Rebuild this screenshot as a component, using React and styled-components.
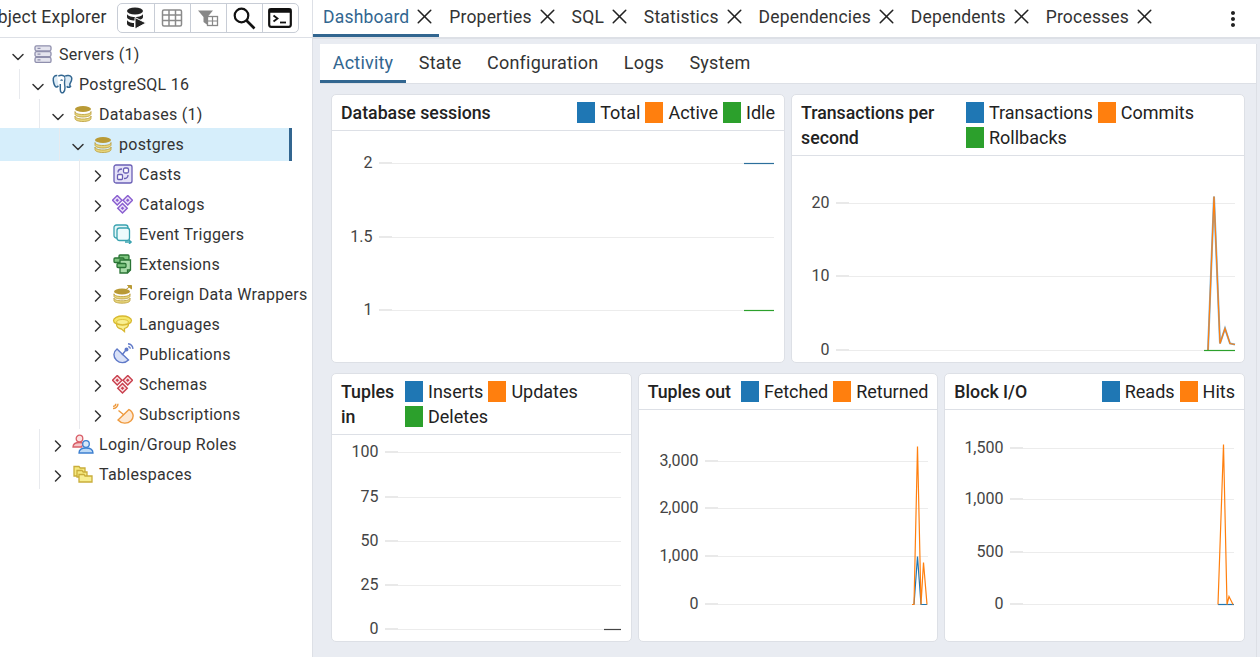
import React from 'react';
import styled, { createGlobalStyle } from 'styled-components';
import { ChevronDown, ChevronRight, X } from 'lucide-react';
import { MdMoreVert } from 'react-icons/md';

const GlobalStyle = createGlobalStyle`
  html, body {
    margin: 0;
    padding: 0;
    width: 1260px;
    height: 657px;
    overflow: hidden;
    font-family: Roboto, "Liberation Sans", sans-serif;
    background: #fff;
    color: #222;
  }
  * { box-sizing: border-box; }
`;

const GOLD = '#b99a35';
const GOLD_FILL = '#e8d77f';

const DbIcon = () => (
  <svg width="18" height="18" viewBox="0 0 18 18">
    <ellipse cx="9" cy="4" rx="8" ry="3" fill={GOLD} />
    <path d="M1 6.500c0 1.800 3.600 3 8 3s8-1.200 8-3v2.500c0 1.800-3.600 3-8 3s-8-1.200-8-3z" fill={GOLD_FILL} stroke={GOLD} strokeWidth=".8" />
    <path d="M1 11c0 1.800 3.600 3 8 3s8-1.200 8-3v2.500c0 1.800-3.600 3-8 3s-8-1.200-8-3z" fill={GOLD_FILL} stroke={GOLD} strokeWidth=".8" />
  </svg>
);

const ServersIcon = () => (
  <svg width="18" height="18" viewBox="0 0 18 18" fill="#e4e4ee" stroke="#8f8fad" strokeWidth="1.300">
    <rect x="1" y="0.800" width="16" height="5" rx="1.500" />
    <rect x="1" y="6.600" width="16" height="5" rx="1.500" />
    <rect x="1" y="12.400" width="16" height="5" rx="1.500" />
    <path d="M3.500 3.300h3M3.500 9.100h3M3.500 14.900h3" />
  </svg>
);

const ElephantIcon = () => (
  <svg width="21" height="21" viewBox="0 0 20 20" fill="none" stroke="#336791" strokeWidth="1.400" strokeLinejoin="round">
    <path d="M5 1.500C2.500 1.200.8 3 1.200 6c.3 2.400 1.200 5.200 2.500 6.200 1 .7 1.800-.2 2.400-1" fill="#dcebf6" />
    <path d="M6 2c1.600-.8 4-.9 5.600 0 1 .6 1 2.500.6 4.200-.3 1.300-.3 3 0 5 .3 2.200.2 5-1.300 6.300-1.500 1.200-3-.2-3-2.500V9.500" fill="#fff" />
    <path d="M12.500 2c1.800-.9 4.700-.7 5.800.8.900 1.300.2 4-.8 5.700-.8 1.300-.6 2.500.2 3.300-1 1-2.800.9-3.800 0" fill="#dcebf6" />
    <path d="M8.500 6.500c0-1 1.300-1 1.300 0" />
  </svg>
);

const CastsIcon = () => (
  <svg width="20" height="20" viewBox="0 0 20 20" fill="none" stroke="#6a5fb5" strokeWidth="1.300">
    <rect x="1" y="1" width="18" height="18" rx="2" fill="#e5e2f8" />
    <rect x="10.500" y="4" width="5" height="5" rx="1.500" fill="#fff" />
    <rect x="4.500" y="10.500" width="5" height="5" rx="1" fill="#fff" />
    <path d="M5 8.500c0-2.500 1.500-3.500 4-3.500M15 11c0 2.500-1.500 3.500-4 3.500" />
  </svg>
);

const DiamondsIcon = ({ color, fill }) => (
  <svg width="21" height="19" viewBox="0 0 20 18">
    {[[5, 5], [15, 5], [10, 12.500]].map(([x, y]) => (
      <g key={x}>
        <path d={`M${x} ${y - 4.500}l4.500 4.500-4.500 4.500-4.500-4.500z`} fill={fill} stroke={color} strokeWidth="1.400" />
        <rect x={x - 1.200} y={y - 1.200} width="2.400" height="2.400" fill={color} transform={`rotate(45 ${x} ${y})`} />
      </g>
    ))}
  </svg>
);

const TriggerIcon = () => (
  <svg width="20" height="20" viewBox="0 0 20 20" fill="none" stroke="#3aa3b0" strokeWidth="1.300">
    <rect x="1" y="1" width="14" height="13" rx="2.500" fill="#e4f6f8" />
    <rect x="4" y="4" width="12.500" height="12.500" rx="2.500" fill="#eefbfc" />
    <path d="M12 18h6M16 16l2.200 2-2.200 2" strokeWidth="1.300" />
  </svg>
);

const ExtensionsIcon = () => (
  <svg width="20" height="20" viewBox="0 0 20 20" stroke="#2a7435" strokeWidth="1.300" fill="#7cc47e">
    <rect x="6" y="1" width="10" height="5" rx="1" />
    <rect x="1" y="4" width="10" height="4.500" rx="1" />
    <path d="M7 6h10.500v10l-3 3H7z" fill="#a9dca9" />
    <rect x="4" y="9.500" width="9" height="4" rx="1" />
    <path d="M14.500 19v-3h3" fill="none" />
  </svg>
);

const FdwIcon = () => (
  <svg width="20" height="20" viewBox="0 0 20 20">
    <ellipse cx="9" cy="7.500" rx="8" ry="3" fill={GOLD} />
    <path d="M1 9.800c0 1.700 3.600 2.800 8 2.800s8-1.100 8-2.800v2.400c0 1.700-3.600 2.800-8 2.800s-8-1.100-8-2.800z" fill={GOLD_FILL} stroke={GOLD} strokeWidth=".8" />
    <path d="M1 14c0 1.700 3.600 2.800 8 2.800s8-1.100 8-2.800v2.400c0 1.700-3.600 2.800-8 2.800s-8-1.100-8-2.800z" fill={GOLD_FILL} stroke={GOLD} strokeWidth=".8" />
    <path d="M13 5.500l4-3M14.500 1.500h4v3.500z" fill={GOLD} stroke={GOLD} strokeWidth="1" />
  </svg>
);

const LanguagesIcon = () => (
  <svg width="21" height="18" viewBox="0 0 20 18" stroke="#d8b830" strokeWidth="1.300" fill="#f5e76a">
    <path d="M4 9c0 2.500 2 4.500 5 5l3 2.500v-3c2-.6 4-2 4-4.500" fill="#f9ef92" />
    <ellipse cx="10" cy="5.500" rx="9" ry="4.500" />
    <ellipse cx="10" cy="7" rx="6" ry="2.500" fill="#f9ef92" strokeWidth=".8" />
  </svg>
);

const PublicationsIcon = () => (
  <svg width="22" height="22" viewBox="0 0 22 22" fill="none" stroke="#5f79c8" strokeWidth="1.400">
    <path d="M5 6 16.500 17c-3.500 3.500-8.500 3.500-12 .3C1 14 1 9 5 6z" fill="#d9e1f7" />
    <path d="M10 12l4-5" />
    <circle cx="14.500" cy="6.500" r="1.300" fill="#5f79c8" />
    <path d="M16 .8c2.500.3 4.700 2.500 5 5M16.300 3.500c1 .2 1.900 1 2.100 2.100" />
  </svg>
);

const SubscriptionsIcon = () => (
  <svg width="22" height="22" viewBox="0 0 22 22" fill="none" stroke="#ee9a3e" strokeWidth="1.400">
    <path d="M17 6.500 6 17c3.500 4 9.500 4 13 .7 3.500-3.500 2.500-8.700-2-11.200z" fill="#fde8d3" />
    <path d="M12 12 6.500 7.500" />
    <path d="M6 .8C6 3.500 3.500 5.500 1 5.500M3.800 .8C3.800 2.300 2.500 3.400 1 3.400" />
  </svg>
);

const RolesIcon = () => (
  <svg width="22" height="20" viewBox="0 0 22 20" strokeWidth="1.300">
    <circle cx="7.500" cy="4.500" r="3.300" fill="#fbe3e3" stroke="#d9606a" />
    <path d="M1 13c0-3 2.500-4.500 6.500-4.500 2 0 3 .4 4 1l-2 3.500z" fill="#f5c6c8" stroke="#d9606a" />
    <circle cx="14" cy="10" r="3.300" fill="#d8e9fa" stroke="#3c7fd0" />
    <path d="M7 19c0-3.500 2.800-5 7-5s7 1.500 7 5z" fill="#bcd9f6" stroke="#3c7fd0" />
  </svg>
);

const TablespacesIcon = () => (
  <svg width="20" height="20" viewBox="0 0 20 20" stroke="#c9ad3a" strokeWidth="1.300" fill="#f5e97f">
    <path d="M1 2.500h5l1.200 1.500H12v8H1z" />
    <path d="M4 6.500h5l1.200 1.500h3.800v5H4z" />
    <path d="M6 10.500h5l1 1.500h7v6H6z" fill="#f7ee90" />
  </svg>
);

const tree = [
  { depth: 0, open: true, label: 'Servers (1)', icon: <ServersIcon /> },
  { depth: 1, open: true, label: 'PostgreSQL 16', icon: <ElephantIcon /> },
  { depth: 2, open: true, label: 'Databases (1)', icon: <DbIcon /> },
  { depth: 3, open: true, label: 'postgres', icon: <DbIcon />, selected: true },
  { depth: 4, label: 'Casts', icon: <CastsIcon /> },
  { depth: 4, label: 'Catalogs', icon: <DiamondsIcon color="#8a5fd0" fill="#ece2fb" /> },
  { depth: 4, label: 'Event Triggers', icon: <TriggerIcon /> },
  { depth: 4, label: 'Extensions', icon: <ExtensionsIcon /> },
  { depth: 4, label: 'Foreign Data Wrappers', icon: <FdwIcon /> },
  { depth: 4, label: 'Languages', icon: <LanguagesIcon /> },
  { depth: 4, label: 'Publications', icon: <PublicationsIcon /> },
  { depth: 4, label: 'Schemas', icon: <DiamondsIcon color="#c9404e" fill="#fbe3e5" /> },
  { depth: 4, label: 'Subscriptions', icon: <SubscriptionsIcon /> },
  { depth: 2, label: 'Login/Group Roles', icon: <RolesIcon /> },
  { depth: 2, label: 'Tablespaces', icon: <TablespacesIcon /> },
];

const objectTabs = ['Dashboard', 'Properties', 'SQL', 'Statistics', 'Dependencies', 'Dependents', 'Processes'];
const dashTabs = ['Activity', 'State', 'Configuration', 'Logs', 'System'];

const BLUE = '#1f77b4';
const ORANGE = '#ff7f0e';
const GREEN = '#2ca02c';

// coordinates are px inside each card body
const charts = {
  sessions: {
    left: 47,
    ticks: [['2', 32], ['1.5', 106], ['1', 179]],
    right: 442,
    series: [
      { color: '#2c6f9c', points: '412,32 442,32' },
      { color: GREEN, points: '412,179 442,179' },
    ],
  },
  transactions: {
    left: 44,
    ticks: [['20', 47], ['10', 120], ['0', 194]],
    right: 443,
    series: [
      { color: BLUE, width: 2, opacity: 0.6, points: '416,194 422,40 428,187 433,172 438,187 443,188' },
      { color: ORANGE, points: '416,194 422,40 428,187 433,172 438,187 443,188' },
      { color: GREEN, points: '412,194 443,194' },
    ],
  },
  tuplesIn: {
    left: 53,
    ticks: [['100', 17], ['75', 62], ['50', 106], ['25', 150], ['0', 194]],
    right: 289,
    series: [{ color: '#444', points: '272,194 289,194' }],
  },
  tuplesOut: {
    left: 66,
    ticks: [['3,000', 51], ['2,000', 98], ['1,000', 146], ['0', 194]],
    right: 289,
    series: [
      { color: BLUE, points: '275,194 278.500,146 282,194 288,194' },
      { color: ORANGE, points: '273,194 275,194 278.500,36 282,194 284.500,152 288,194' },
    ],
  },
  blockIo: {
    left: 65,
    ticks: [['1,500', 38], ['1,000', 89], ['500', 142], ['0', 194]],
    right: 289,
    series: [
      { color: BLUE, points: '273,194 289,194' },
      { color: ORANGE, points: '273,194 278.500,34 282,194 284,186 288,194' },
    ],
  },
};

const Chart = ({ left, right, ticks, series }) => (
  <ChartSvg>
    <g transform="translate(0 .5)">
      {ticks.map(([label, y]) => (
        <g key={label}>
          <line x1={left} x2={right} y1={y} y2={y} stroke="#ececec" />
          <line x1={left} x2={left + 13} y1={y - 0.5} y2={y - 0.5} stroke="#e9e9e9" strokeWidth="2" />
          <TickLabel x={left - 6.5} y={y + 4} textAnchor="end">{label}</TickLabel>
        </g>
      ))}
      {series.map((s) => (
        <polyline
          key={s.color}
          points={s.points}
          fill="none"
          stroke={s.color}
          strokeWidth={s.width || 1.2}
          strokeOpacity={s.opacity || 1}
        />
      ))}
    </g>
  </ChartSvg>
);

const ChartCard = ({ title, titleWidth, legend, chart }) => (
  <Card>
    <CardHeader>
      <CardTitle $width={titleWidth}>{title}</CardTitle>
      <Legend $fill={Boolean(titleWidth)}>
        {legend.map(([name, color]) => (
          <LegendItem key={name}>
            <Swatch $color={color} />
            {name}
          </LegendItem>
        ))}
      </Legend>
    </CardHeader>
    <CardBody>
      <Chart {...chart} />
    </CardBody>
  </Card>
);

const App = () => (
  <>
    <GlobalStyle />
    <Page>
      <Sidebar>
        <SidebarHeader>
          <SidebarTitle>Object Explorer</SidebarTitle>
          <ToolGroup>
            <ToolButton>
              <svg width="24" height="24" viewBox="0 0 24 24" fill="#222">
                <ellipse cx="11" cy="5" rx="8" ry="3.500" />
                <path d="M3 7.500c0 2 3.600 3.500 8 3.500s8-1.500 8-3.500V11c0 2-3.600 3.500-8 3.500S3 13 3 11z" />
                <path d="M3 13.500c0 2 3.600 3.500 7 3.500v4c-3.600 0-7-1.500-7-3.500z" />
                <path d="M11 11.500 22 17l-11 6z" stroke="#fff" strokeWidth="1" />
              </svg>
            </ToolButton>
            <ToolButton>
              <svg width="22" height="20" viewBox="0 0 22 20" fill="#cfcfcf" stroke="#8a8a8a" strokeWidth="1.500">
                <rect x="1.500" y="2" width="19" height="16" rx="1.500" fill="none" />
                <path d="M1.500 7h19M1.500 12.500h19M8 2v16M14.500 2v16" fill="none" />
              </svg>
            </ToolButton>
            <ToolButton>
              <svg width="22" height="20" viewBox="0 0 22 20">
                <path d="M1 2.500h15l-5.500 6.500v8l-4-3V9z" fill="#888" />
                <rect x="10.500" y="8.500" width="10" height="9" fill="#fff" stroke="#888" strokeWidth="1.300" />
                <path d="M10.500 13h10M15.500 8.500v9" stroke="#888" strokeWidth="1.200" />
              </svg>
            </ToolButton>
            <ToolButton>
              <svg width="24" height="24" viewBox="0 0 24 24" fill="none" stroke="#111" strokeWidth="2.200">
                <circle cx="9.500" cy="9.500" r="6.800" />
                <path d="M14.500 14.500 22.500 22.500" strokeWidth="2.600" />
              </svg>
            </ToolButton>
            <ToolButton>
              <svg width="24" height="20" viewBox="0 0 24 20" fill="none" stroke="#111">
                <rect x="1.200" y="1.200" width="21.600" height="17.600" rx="2" strokeWidth="2.200" />
                <rect x="1.200" y="1.200" width="21.600" height="3" fill="#111" strokeWidth="1" />
                <path d="M5.500 7.500l4 3-4 3" strokeWidth="1.800" />
                <path d="M12 14.500h6" strokeWidth="1.800" />
              </svg>
            </ToolButton>
          </ToolGroup>
        </SidebarHeader>
        <Tree>
          {tree.map(({ depth, open, label, icon, selected }) => (
            <TreeRow key={label} $depth={depth} $selected={selected}>
              <Toggle $open={open}>
                {open ? <ChevronDown size={20} strokeWidth={1.8} /> : <ChevronRight size={20} strokeWidth={1.8} />}
              </Toggle>
              <TreeIcon>{icon}</TreeIcon>
              <TreeLabel>{label}</TreeLabel>
            </TreeRow>
          ))}
        </Tree>
      </Sidebar>
      <Main>
        <ObjectTabs>
          {objectTabs.map((tab, i) => (
            <ObjectTab key={tab} $active={i === 0}>
              {tab}
              <X size={25} strokeWidth={1.5} color="#222" />
            </ObjectTab>
          ))}
          <MoreButton>
            <MdMoreVert size={24} />
          </MoreButton>
        </ObjectTabs>
        <Content>
          <DashTabs>
            {dashTabs.map((tab, i) => (
              <DashTab key={tab} $active={i === 0}>{tab}</DashTab>
            ))}
          </DashTabs>
          <Charts>
            <ChartRow $cols={2}>
              <ChartCard
                title="Database sessions"
                legend={[['Total', BLUE], ['Active', ORANGE], ['Idle', GREEN]]}
                chart={charts.sessions}
              />
              <ChartCard
                title="Transactions per second"
                titleWidth={165}
                legend={[['Transactions', BLUE], ['Commits', ORANGE], ['Rollbacks', GREEN]]}
                chart={charts.transactions}
              />
            </ChartRow>
            <ChartRow $cols={3}>
              <ChartCard
                title="Tuples in"
                titleWidth={64}
                legend={[['Inserts', BLUE], ['Updates', ORANGE], ['Deletes', GREEN]]}
                chart={charts.tuplesIn}
              />
              <ChartCard
                title="Tuples out"
                legend={[['Fetched', BLUE], ['Returned', ORANGE]]}
                chart={charts.tuplesOut}
              />
              <ChartCard
                title="Block I/O"
                legend={[['Reads', BLUE], ['Hits', ORANGE]]}
                chart={charts.blockIo}
              />
            </ChartRow>
          </Charts>
        </Content>
      </Main>
    </Page>
  </>
);

const Page = styled.div`
  display: flex;
  width: 1260px;
  height: 657px;
  overflow: hidden;
`;

const Sidebar = styled.aside`
  flex: 0 0 313px;
  border-right: 1px solid #dde0e6;
  background: #fff;
  overflow: hidden;
`;

const SidebarHeader = styled.div`
  display: flex;
  align-items: center;
  height: 38px;
  padding-bottom: 2px;
  border-bottom: 1px solid #dde0e6;
`;

const SidebarTitle = styled.div`
  flex: 0 0 auto;
  margin: -1px 0 0 -14.6px;
  font-size: 17.5px;
  letter-spacing: 0.2px;
  color: #333;
`;

const ToolGroup = styled.div`
  display: flex;
  margin-left: 10px;
  height: 30px;
  border: 1px solid #c8cdd6;
  border-radius: 5px;
`;

const ToolButton = styled.div`
  display: flex;
  align-items: center;
  justify-content: center;
  width: 36px;
  & + & {
    border-left: 1px solid #c8cdd6;
  }
`;

const Tree = styled.div`
  padding-top: 1px;
`;

const TreeRow = styled.div`
  position: relative;
  display: flex;
  align-items: center;
  width: 292px;
  height: ${(p) => (p.$selected ? '33px' : '30px')};
  margin: ${(p) => (p.$selected ? '-1px 0 -2px' : '0')};
  padding-left: ${(p) => p.$depth * 20 + 9}px;
  background: ${(p) => (p.$selected ? '#d6eefb' : 'transparent')};
  border-right: 3px solid ${(p) => (p.$selected ? '#326690' : 'transparent')};
  &::before {
    content: '';
    display: ${(p) => (p.$depth ? 'block' : 'none')};
    position: absolute;
    top: 0;
    bottom: 0;
    left: ${(p) => p.$depth * 20 - 1}px;
    width: 1px;
    background: #e8eaee;
  }
`;

const Toggle = styled.span`
  display: flex;
  justify-content: center;
  flex: 0 0 17px;
  min-width: 0;
  margin-top: ${(p) => (p.$open ? '5px' : '3px')};
  color: #333;
  svg {
    flex-shrink: 0;
  }
`;

const TreeIcon = styled.span`
  display: flex;
  align-items: center;
  justify-content: center;
  flex: 0 0 21px;
  min-width: 0;
  margin: 0 6px;
  svg {
    flex-shrink: 0;
  }
`;

const TreeLabel = styled.span`
  font-size: 16px;
  letter-spacing: 0.3px;
  white-space: nowrap;
  color: #333;
`;

const Main = styled.main`
  flex: 1;
  display: flex;
  flex-direction: column;
  min-width: 0;
  background: #e9ecf2;
`;

const ObjectTabs = styled.div`
  display: flex;
  height: 39px;
  flex: 0 0 39px;
  background: #fff;
  border-bottom: 2px solid #dde0e6;
`;

const ObjectTab = styled.div`
  display: flex;
  align-items: center;
  gap: 3px;
  height: 37px;
  padding: 0 1.8px 1px 10px;
  font-size: 17.5px;
  letter-spacing: 0.2px;
  color: ${(p) => (p.$active ? '#326690' : '#333')};
  border-bottom: 3px solid ${(p) => (p.$active ? '#326690' : 'transparent')};
`;

const MoreButton = styled.div`
  display: flex;
  align-items: center;
  margin-left: auto;
  margin-right: 15px;
  color: #222;
`;

const Content = styled.div`
  flex: 1;
  display: flex;
  flex-direction: column;
  min-height: 0;
  margin: 5px 3px 0 7px;
  border-right: 1px solid #dde0e6;
`;

const DashTabs = styled.div`
  display: flex;
  flex: 0 0 40px;
  background: #fff;
  border-bottom: 1px solid #dde0e6;
`;

const DashTab = styled.div`
  display: flex;
  align-items: center;
  height: 39px;
  padding: 0 12.75px;
  font-size: 18px;
  letter-spacing: 0.2px;
  color: ${(p) => (p.$active ? '#326690' : '#333')};
  border-bottom: 3px solid ${(p) => (p.$active ? '#326690' : 'transparent')};
`;

const Charts = styled.div`
  display: flex;
  flex-direction: column;
  gap: 10px;
  padding: 10px 11px 0 11px;
`;

const ChartRow = styled.div`
  display: grid;
  grid-template-columns: repeat(${(p) => p.$cols}, 1fr);
  gap: 6px;
  height: 269px;
`;

const Card = styled.section`
  display: flex;
  flex-direction: column;
  min-width: 0;
  background: #fff;
  border: 1px solid #dde0e6;
  border-radius: 5px;
`;

const CardHeader = styled.header`
  display: flex;
  align-items: flex-start;
  justify-content: space-between;
  padding: 5px 9px 5px 9px;
  border-bottom: 1px solid #dde0e6;
  font-size: 18px;
  line-height: 25px;
`;

const CardTitle = styled.div`
  flex: ${(p) => (p.$width ? `0 0 ${p.$width}px` : '0 0 auto')};
  margin-top: 1px;
  margin-bottom: -1px;
  font-size: 17.75px;
  font-weight: 500;
  color: #222;
`;

const Legend = styled.div`
  display: flex;
  flex-wrap: wrap;
  flex: ${(p) => (p.$fill ? '1' : '0 0 auto')};
  column-gap: 5px;
  color: #222;
`;

const LegendItem = styled.div`
  display: flex;
  align-items: center;
  white-space: nowrap;
`;

const Swatch = styled.span`
  width: 18px;
  height: 21px;
  margin-right: 5px;
  background: ${(p) => p.$color};
`;

const CardBody = styled.div`
  flex: 1;
  min-height: 0;
`;

const ChartSvg = styled.svg`
  display: block;
  width: 100%;
  height: 100%;
`;

const TickLabel = styled.text`
  font-size: 16px;
  fill: #444;
`;

export default App;
